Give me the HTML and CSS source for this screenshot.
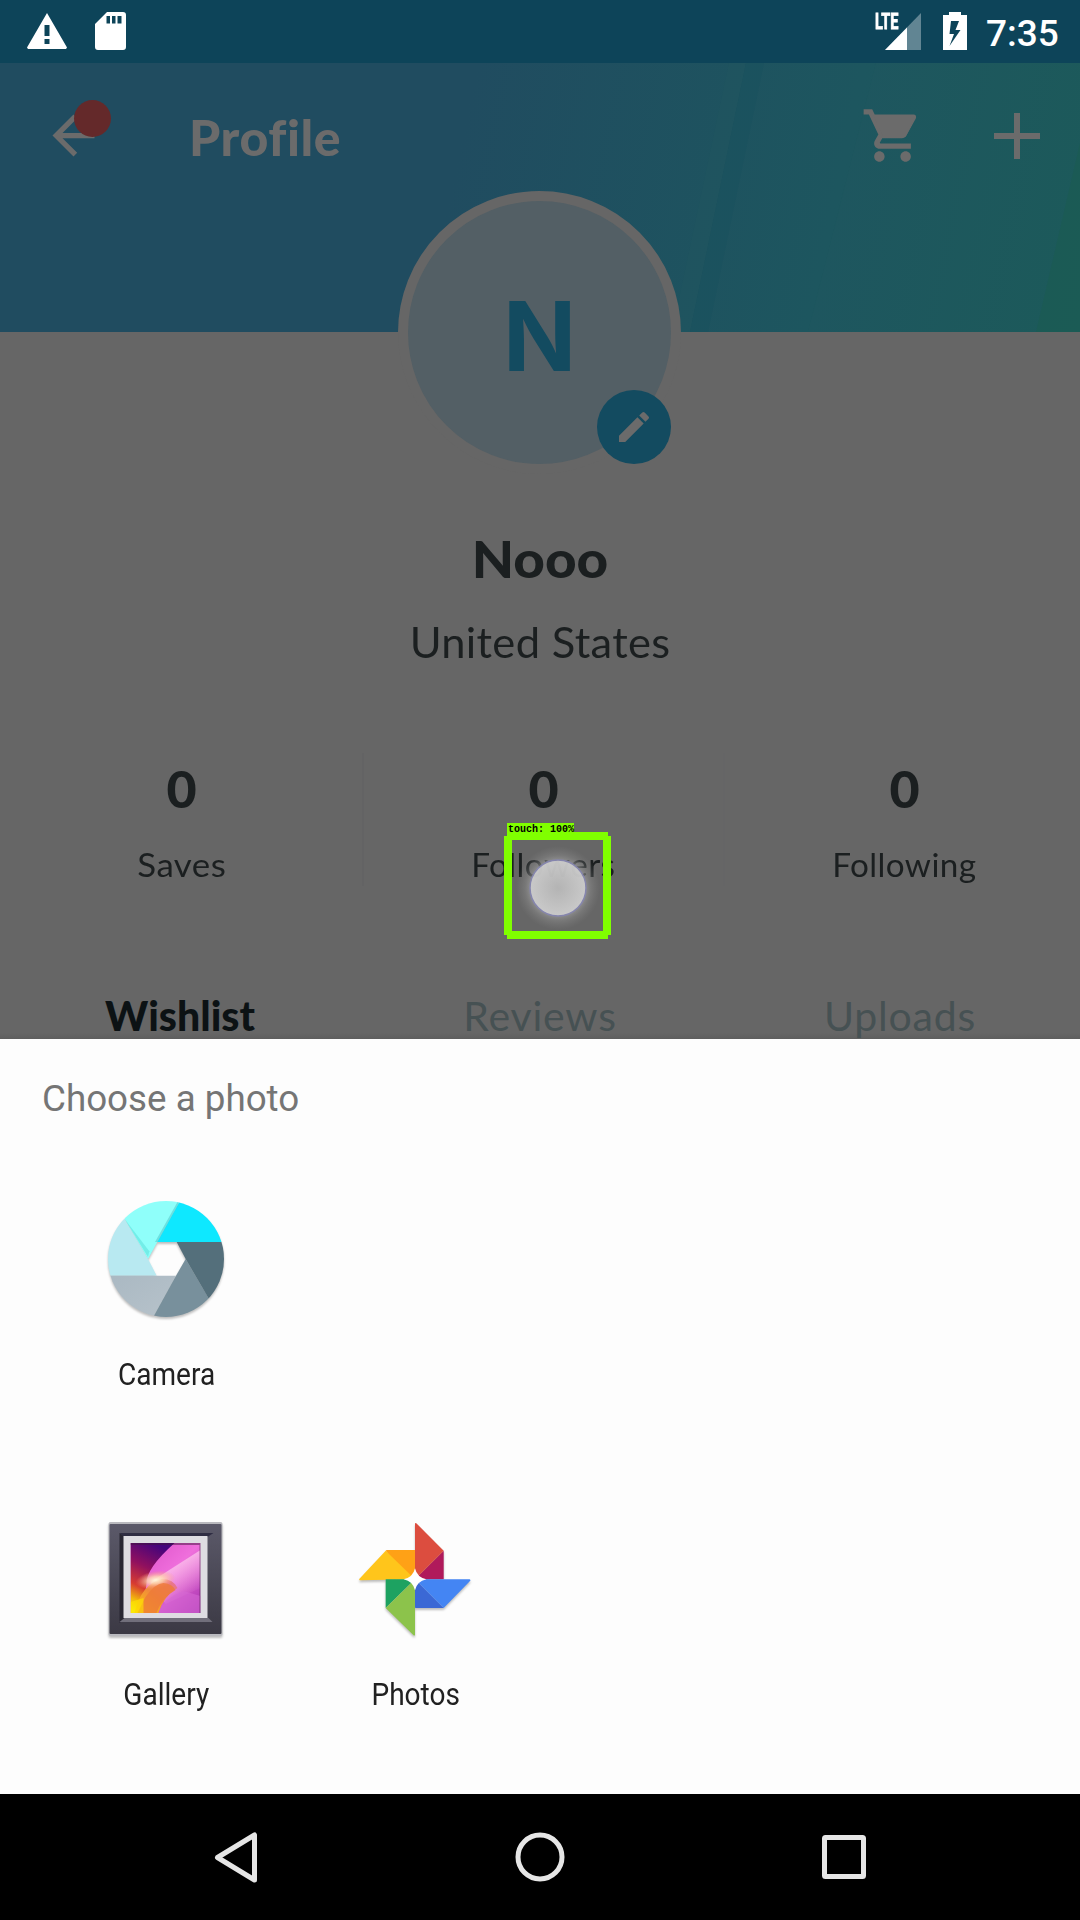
FILE: index.html
```html
<!DOCTYPE html>
<html lang="en">
<head>
<meta charset="utf-8">
<title>Profile</title>
<link rel="stylesheet" href="styles.css">
</head>
<body>
<div class="screen">
  <header class="status">
    <svg class="status-warn" viewBox="0 0 40 36"><path fill="#fff" fill-rule="evenodd" d="M20 0 40 34.500 39 36H1L0 34.500ZM17.500 12V23H22.500V12ZM17.500 26V31H22.500V26Z"/></svg>
    <svg class="status-sd" viewBox="0 0 31 38"><path fill="#fff" fill-rule="evenodd" d="M12 0H28Q31 0 31 3V35Q31 38 28 38H3Q0 38 0 35V12ZM11.500 4V11.500H15V4ZM17 4V11.500H20.500V4ZM22.500 4V11.500H26.500V4Z"/></svg>
    <div class="signal">
      <svg viewBox="0 0 36 37"><path fill="#fff" fill-opacity=".35" d="M36 0V37H0Z"/><path fill="#fff" d="M22 14.400V37H0Z"/></svg>
      <span class="lte">LTE</span>
    </div>
    <svg class="battery" viewBox="0 0 24 38"><path fill="#fff" fill-rule="evenodd" d="M6 0H18V3H24V38H0V3H6ZM8 9 6.500 22H11L6.500 34 17.500 18H12.500L16 9Z"/></svg>
    <span class="clock">7:35</span>
  </header>

  <main class="profile">
    <div class="banner">
      <svg class="banner-art" viewBox="0 0 1080 269" preserveAspectRatio="none">
        <path class="beam" d="M729 0H746L690 269H672Z"/>
        <path class="shade" d="M746 0H764L708 269H690Z"/>
        <path class="beam" d="M876 0H1080V269H808Z"/>
        <path class="corner" d="M1080 80V269H1036Z"/>
      </svg>
      <div class="back">
        <svg viewBox="0 0 24 24"><path d="M20 11H7.830l5.590-5.590L12 4l-8 8 8 8 1.410-1.410L7.830 13H20v-2z"/></svg>
        <i class="dot"></i>
      </div>
      <h1 class="title">Profile</h1>
      <svg class="cart" viewBox="0 0 24 24"><path d="M7 18c-1.100 0-1.990.9-1.990 2S5.900 22 7 22s2-.9 2-2-.9-2-2-2zM1 2v2h2l3.600 7.590-1.350 2.450c-.16.28-.25.61-.25.96 0 1.100.9 2 2 2h12v-2H7.420c-.14 0-.25-.11-.25-.25l.03-.12.9-1.630h7.450c.75 0 1.410-.41 1.750-1.030l3.580-6.490A1.003 1.003 0 0 0 20 4H5.210l-.94-2H1zm16 16c-1.100 0-1.990.9-1.990 2s.89 2 1.990 2 2-.9 2-2-.9-2-2-2z"/><path d="M4.800 4.500H21L17 12.500H8.500Z"/></svg>
      <svg class="plus" viewBox="0 0 46 46"><path d="M20 0H26V20H46V26H26V46H20V26H0V20H20Z"/></svg>
      <div class="avatar">
        <span class="initial">N</span>
        <div class="edit"><svg viewBox="0 0 24 24"><path d="M3 17.250V21h3.750L17.810 9.940l-3.750-3.750L3 17.250zM20.710 7.040a.996.996 0 0 0 0-1.410l-2.340-2.340a.996.996 0 0 0-1.410 0l-1.830 1.830 3.750 3.750 1.830-1.830z"/></svg></div>
      </div>
    </div>

    <h2 class="name">Nooo</h2>
    <p class="country">United States</p>

    <div class="stats">
      <div class="stat"><b>0</b><span>Saves</span></div>
      <div class="stat"><b>0</b><span>Followers</span></div>
      <div class="stat"><b>0</b><span>Following</span></div>
    </div>

    <nav class="tabs">
      <span class="tab active">Wishlist</span>
      <span class="tab">Reviews</span>
      <span class="tab">Uploads</span>
    </nav>

    <div class="touch">
      <svg viewBox="0 0 107 107">
        <defs><radialGradient id="halo"><stop offset=".62" stop-color="#aaa" stop-opacity=".7"/><stop offset=".78" stop-color="#999" stop-opacity=".35"/><stop offset="1" stop-color="#888" stop-opacity="0"/></radialGradient>
        <radialGradient id="tap"><stop offset="0" stop-color="#b9b9b9"/><stop offset="1" stop-color="#d2d2d2"/></radialGradient></defs>
        <circle cx="54" cy="56" r="42" fill="url(#halo)"/>
        <circle cx="54" cy="56" r="28" fill="url(#tap)" fill-opacity=".85" stroke="#8585ad" stroke-width="1.500"/>
        <path fill="#80ff00" fill-rule="evenodd" d="M3 0H104V4H107V103H104V107H3V103H0V4H3ZM8 8V99H99V8Z"/>
      </svg>
      <span class="touch-label">touch: 100%</span>
    </div>
  </main>

  <section class="sheet">
    <h3 class="sheet-title">Choose a photo</h3>
    <div class="apps">
      <div class="app">
        <svg class="app-icon" viewBox="261 418 360 360">
          <defs><clipPath id="disc"><circle cx="438" cy="598" r="174"/></clipPath>
          <linearGradient id="fold" x1="0" y1="0" x2="1" y2="1"><stop offset="0" stop-color="#a9b8c2"/><stop offset="1" stop-color="#b8c3cb"/></linearGradient></defs>
          <g class="lens" clip-path="url(#disc)">
            <path fill="#8ffffa" d="M314 478 290 400H494L412 547 384 598Z"/>
            <path fill="#0ee8ff" d="M478 428 494 400H640V547H412Z"/>
            <path fill="#b8e9f1" d="M314 478 250 420V648H410L384 598Z"/>
            <path fill="url(#fold)" d="M250 648H468L402 768 390 790H250Z"/>
            <path fill="#78909c" d="M468 648 497 598 565 714 600 790H390Z"/>
            <path fill="#546f7b" d="M470 547H640V780H603L497 598Z"/>
            <path fill="#4fd8d2" fill-opacity=".45" d="M314 478 384 592 388 575Z"/>
            <path fill="#2ca8ae" fill-opacity=".35" d="M478 428 412 547H405L472 428Z"/>
          </g>
        </svg>
        <span class="app-name camera">Camera</span>
      </div>
      <div class="app-break"></div>
      <div class="app">
        <svg class="app-icon" viewBox="1.500 3 120 120">
          <defs>
            <linearGradient id="frame" x1="0" y1="0" x2="0" y2="1"><stop offset="0" stop-color="#5b5969"/><stop offset="1" stop-color="#3b3944"/></linearGradient>
            <linearGradient id="art" x1="0" y1="0" x2="1" y2="1"><stop offset="0" stop-color="#d84ac4"/><stop offset=".5" stop-color="#ef6fdc"/><stop offset="1" stop-color="#a532ae"/></linearGradient>
            <linearGradient id="dusk" x1=".5" y1="0" x2=".2" y2="1"><stop offset="0" stop-color="#45047c"/><stop offset=".35" stop-color="#90105f"/><stop offset=".65" stop-color="#d83c31"/><stop offset=".85" stop-color="#f3b80c"/><stop offset="1" stop-color="#f4ea12"/></linearGradient>
            <radialGradient id="glow"><stop offset="0" stop-color="#fff8dc"/><stop offset=".4" stop-color="#ffd9b0" stop-opacity=".8"/><stop offset="1" stop-color="#ff9d70" stop-opacity="0"/></radialGradient>
            <linearGradient id="petal" x1="0" y1="1" x2="1" y2="0"><stop offset="0" stop-color="#ffd000"/><stop offset=".5" stop-color="#f08a3c"/><stop offset="1" stop-color="#e66fa8"/></linearGradient>
            <linearGradient id="haze" x1="0" y1="0" x2=".6" y2="1"><stop offset="0" stop-color="#f6a6e2" stop-opacity="0"/><stop offset=".45" stop-color="#fab9ea" stop-opacity=".85"/><stop offset="1" stop-color="#f6a6e2" stop-opacity="0"/></linearGradient>
            <clipPath id="pane"><rect x="25" y="27" width="70" height="70"/></clipPath>
          </defs>
          <rect x="3" y="6" width="114" height="114" rx="2" fill="#b9b9be"/>
          <rect x="4" y="8" width="112" height="110" rx="1" fill="url(#frame)"/>
          <path fill="#292733" d="M14 17 19 20V103L14 107Z"/>
          <path fill="#2f2d43" d="M14 17H108L102 21H19Z"/>
          <path fill="#716f7b" d="M19 102H103L107 106H14Z"/>
          <path fill="#dedde2" d="M18 20H102V102H18Z"/>
          <g clip-path="url(#pane)">
            <path fill="url(#art)" d="M25 27H95V97H25Z"/>
            <path fill="url(#haze)" d="M45 66 95 34V72L60 88Z"/>
            <path fill="url(#dusk)" d="M25 27H69Q40 53 41 68Q40 78 34 97H25Z"/>
            <path fill="url(#petal)" d="M29 97Q36 68 56 63Q68 63 72 72Q58 80 53 97Z"/>
            <ellipse cx="50" cy="64" rx="20" ry="9" fill="url(#glow)" transform="rotate(-8 50 64)"/>
            <path fill="#ee7a38" d="M40 81Q50 67 58 67Q67 68 70 74Q56 82 51 97H32Z" fill-opacity=".8"/>
            <path fill="#d568d4" d="M53 97Q57 83 78 75L95 80V97Z" fill-opacity=".6"/>
            <path fill="#ffe600" fill-opacity=".6" d="M25 86 38 82 38 97H25Z"/>
            <path fill="none" stroke="#41143c" stroke-opacity=".5" stroke-width="2" d="M25 28H95V97"/>
          </g>
        </svg>
        <span class="app-name gallery">Gallery</span>
      </div>
      <div class="app">
        <svg class="app-icon pinwheel" viewBox="49 57 360 360">
          <path fill="#ffa116" d="M138 152Q139 150 142 150H226V238H210Z"/>
          <path fill="#ffc51b" d="M58 238 138 152 226 238 60 241Z"/>
          <path fill="#b01a5b" d="M312 152V238H226Z"/>
          <path fill="#dc4d3f" d="M226 72Q226 68 230 70L312 152 226 238Z"/>
          <path fill="#3b68d5" d="M226 238 312 324H228Q226 324 226 322Z"/>
          <path fill="#4485f3" d="M226 238H390Q394 240 391 243L312 324Z"/>
          <path fill="#1da261" d="M138 238H226L138 324Z"/>
          <path fill="#8cc34b" d="M226 238V405Q224 408 221 405L138 324Z"/>
          <path fill="#fff" d="M226 205Q232 232 260 238Q232 244 226 271Q220 244 192 238Q220 232 226 205Z"/>
        </svg>
        <span class="app-name photos">Photos</span>
      </div>
    </div>
  </section>

  <footer class="navbar">
    <svg viewBox="0 0 60 60"><path d="M48.500 8V53L11.500 30.500Z"/></svg>
    <svg viewBox="0 0 60 60"><circle cx="30" cy="30" r="22"/></svg>
    <svg viewBox="0 0 60 60"><rect x="10.500" y="10.500" width="39" height="39" rx="1"/></svg>
  </footer>
</div>
</body>
</html>
```
FILE: styles.css
```css
* { box-sizing: border-box; margin: 0; padding: 0; }
body { background: #666; }
svg { display: block; flex: none; }

.screen {
  width: 1080px;
  height: 1920px;
  display: flex;
  flex-direction: column;
  overflow: hidden;
  font-family: Lato, "Liberation Sans", sans-serif;
}

/* Status bar */
.status {
  height: 63px;
  flex: none;
  display: flex;
  align-items: flex-start;
  padding: 12px 22px 0 27px;
  background: #0d4459;
  color: #fff;
  font-family: Roboto, sans-serif;
}
.status-warn { width: 40px; height: 36px; margin-top: 1px; }
.status-sd { width: 31px; height: 38px; margin-left: 28px; }
.signal { position: relative; margin: 1px 22px 0 auto; }
.signal svg { width: 36px; height: 37px; }
.lte {
  position: absolute;
  left: -10px;
  top: -2px;
  font-size: 22px;
  line-height: 22px;
  font-weight: 700;
  -webkit-text-stroke: .8px #fff;
  transform: scaleX(.66);
  transform-origin: left;
}
.battery { width: 24px; height: 38px; }
.clock {
  width: 72px;
  margin-left: 19px;
  font-size: 37px;
  line-height: 43px;
  font-weight: 500;
  white-space: nowrap;
}

/* Profile behind the sheet */
.profile {
  position: relative;
  height: 976px;
  flex: none;
  overflow: hidden;
  background: linear-gradient(transparent 970px, #5e5e5e 976px), #666;
  color: #1b1f20;
}
.banner {
  position: relative;
  height: 269px;
  display: flex;
  align-items: flex-start;
  padding: 41px 40px 0 43px;
  background: linear-gradient(102deg, #204c60 42%, #1d565f 76%, #1b5a5a 100%);
}
.banner-art { position: absolute; inset: 0; width: 1080px; height: 269px; }
.banner path { fill: #6b6b6b; }
.banner .beam { fill: #22595f; fill-opacity: .2; }
.banner .shade { fill: #17505f; fill-opacity: .35; }
.banner .corner { fill: #1b5b52; fill-opacity: .6; }
.back { position: relative; left: -1px; width: 63px; height: 63px; }
.dot {
  position: absolute;
  left: 32px;
  top: -4px;
  width: 37px;
  height: 37px;
  border-radius: 50%;
  background: #64292a;
}
.title {
  position: relative;
  margin-left: 83px;
  font-size: 50px;
  line-height: 66px;
  font-weight: 900;
  letter-spacing: .6px;
  color: #6b6b6b;
}
.cart { position: relative; width: 63px; height: 63px; margin-left: auto; }
.plus { position: relative; width: 46px; height: 46px; margin: 9px 0 0 70px; }
.avatar {
  position: absolute;
  left: 398px;
  top: 128px;
  width: 283px;
  height: 283px;
  border: 10px solid #666;
  border-radius: 50%;
  background: #535f65;
  display: flex;
  align-items: center;
  justify-content: center;
}
.initial {
  font-family: Inter, sans-serif;
  font-size: 96px;
  line-height: 100px;
  font-weight: 700;
  color: #134b60;
  margin-top: 6px;
}
.edit {
  position: absolute;
  right: 0;
  bottom: 0;
  width: 74px;
  height: 74px;
  border-radius: 50%;
  background: #134b60;
  display: flex;
  align-items: center;
  justify-content: center;
}
.edit svg { width: 40px; height: 40px; }
.name {
  margin-top: 196px;
  text-align: center;
  font-size: 52px;
  line-height: 60px;
  font-weight: 900;
  transform: scaleX(1.055);
}
.country {
  margin-top: 29px;
  text-align: center;
  font-size: 42px;
  line-height: 50px;
  letter-spacing: .3px;
  transform: scaleX(1.035);
}
.stats {
  height: 133px;
  margin: 86px 0 0 1px;
  display: grid;
  grid-template-columns: repeat(3, 361px);
}
.stat {
  padding-top: 5px;
  display: flex;
  flex-direction: column;
  align-items: center;
  gap: 27px;
}
.stat + .stat { border-left: 2px solid #636364; }
.stat:last-child { border-left-color: #656566; }
.stat b { font-size: 52px; line-height: 60px; font-weight: 900; }
.stat span { font-size: 32px; line-height: 40px; letter-spacing: .4px; transform: scaleX(1.04); }
.stat:first-child span { transform: scaleX(1.09); }
.tabs {
  margin-top: 105px;
  display: grid;
  grid-template-columns: repeat(3, 360px);
  text-align: center;
  font-size: 41px;
  line-height: 50px;
  color: #465153;
}
.tab { letter-spacing: .8px; }
.tab.active { letter-spacing: 0; font-weight: 900; color: #0c1214; }

/* Touch marker */
.touch { position: absolute; left: 504px; top: 769px; width: 107px; height: 107px; }
.touch svg { width: 107px; height: 107px; }
.touch-label {
  position: absolute;
  left: 3px;
  top: -9px;
  width: 67px;
  height: 12px;
  padding-left: 1px;
  background: #80ff00;
  color: #000;
  font: 700 10px/14px "Liberation Mono", monospace;
  white-space: nowrap;
}

/* Chooser sheet */
.sheet {
  height: 755px;
  flex: none;
  padding: 35px 42px 0;
  background: #fdfdfd;
  font-family: Roboto, sans-serif;
}
.sheet-title {
  font-size: 36.750px;
  line-height: 50px;
  font-weight: 400;
  color: #757575;
}
.apps { margin-top: 75px; display: flex; flex-wrap: wrap; }
.app-break { width: 600px; }
.app {
  width: 249px;
  height: 320px;
  display: flex;
  flex-direction: column;
  align-items: center;
  gap: 36px;
}
.app-icon { width: 120px; height: 120px; filter: drop-shadow(0 2px 1px rgba(0, 0, 0, .25)); }
.app-name {
  font-size: 31.500px;
  line-height: 40px;
  color: #212121;
  transform: scaleX(.89);
}

/* Navigation bar */
.navbar {
  height: 126px;
  flex: none;
  display: flex;
  align-items: center;
  justify-content: center;
  gap: 244px;
  background: #000;
}
.navbar svg { width: 60px; height: 60px; fill: none; stroke: #e6e6e6; stroke-width: 5; stroke-linejoin: round; }
```
